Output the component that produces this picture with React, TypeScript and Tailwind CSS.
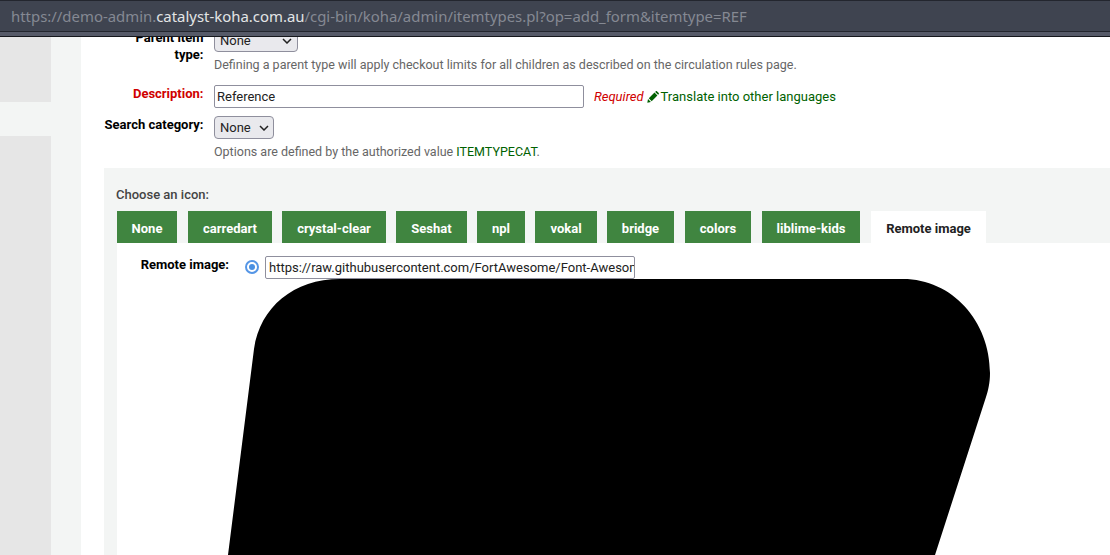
const tabs = [
  { label: 'None', w: 'w-[60px] mr-[11px]' },
  { label: 'carredart', w: 'w-[84px] mr-[10px]' },
  { label: 'crystal-clear', w: 'w-[104px] mr-[10px]' },
  { label: 'Seshat', w: 'w-[71px] mr-[10px]' },
  { label: 'npl', w: 'w-[48px] mr-[10px]' },
  { label: 'vokal', w: 'w-[62px] mr-[10px]' },
  { label: 'bridge', w: 'w-[67px] mr-[11px]' },
  { label: 'colors', w: 'w-[66px] mr-[11px]' },
  { label: 'liblime-kids', w: 'w-[98px] mr-[11px]' },
];

function Chevron() {
  return (
    <svg width="10" height="6" viewBox="0 0 10 6" fill="none" stroke="#222" strokeWidth="1.5">
      <path d="M1 1l4 4 4-4" />
    </svg>
  );
}

function Pencil() {
  return (
    <svg width="12" height="12" viewBox="0 0 12 12" fill="#006100">
      <path d="M0.3 11.7l0.7-3.6 2.9 2.9zM1.8 7.3L7.5 1.6l2.9 2.9-5.7 5.7zM8.2 0.9l0.6-0.6c0.3-0.3 0.8-0.3 1.1 0l1.8 1.8c0.3 0.3 0.3 0.8 0 1.1l-0.6 0.6z" />
    </svg>
  );
}

export default function App() {
  return (
    <div className="h-[555px] w-[1110px] overflow-hidden bg-white font-['Roboto',sans-serif] text-[13px] flex flex-col">
      <div className="h-[37px] shrink-0 bg-[#565a68] border-b border-[#15171c]">
        <div className="h-[32px] border-t border-b border-[#23262e] bg-[#3f4450] pl-[11px] pt-[5px] text-[14.92px] leading-[20px] font-['Noto_Sans',sans-serif] text-[#858993] whitespace-nowrap">
          https://demo-admin.<span className="text-[#e3e4e6]">catalyst-koha.com.au</span>/cgi-bin/koha/admin/itemtypes.pl?op=add_form&amp;itemtype=REF
        </div>
      </div>

      <div className="flex flex-1 min-h-0">
        {/* sidebar */}
        <div className="w-[81px] shrink-0 bg-[#f3f5f4] flex">
          <div className="w-[51px] flex flex-col">
            <div className="h-[65px] bg-[#e6e6e6]" />
            <div className="h-[34px]" />
            <div className="flex-1 bg-[#e6e6e6]" />
          </div>
        </div>

        <div className="flex-1 min-w-0 pl-[23px]">
          {/* form rows */}
          <div className="h-[131px] overflow-hidden">
            <div className="flex -mt-[8px]">
              <div className="w-[99.5px] shrink-0 text-right font-bold text-black leading-[17px]">
                Parent item type:
              </div>
              <div className="ml-[10.5px]">
                <div className="w-[84px] h-[23px] rounded-[4px] border border-[#8f8f9d] bg-[#e9e9ed] flex items-center justify-between pl-[5px] pr-[5px] text-[#222]">
                  None
                  <Chevron />
                </div>
                <div className="mt-[5px] text-[12.5px] leading-[16px] text-[#666]">
                  Defining a parent type will apply checkout limits for all children as described on the circulation rules page.
                </div>
              </div>
            </div>

            <div className="flex mt-[12px]">
              <div className="w-[99.5px] shrink-0 text-right font-bold text-[#d00000] leading-[17px]">
                Description:
              </div>
              <div className="ml-[10.5px] w-[370px] h-[23px] rounded-[2px] border border-[#8f8f9d] pl-[2px] flex items-center text-[#222]">
                Reference
              </div>
              <div className="ml-[10px] h-[23px] flex items-center text-[#006100]">
                <span className="italic text-[#d00000]">Required</span>
                <span className="ml-[3px] mr-[2px]">
                  <Pencil />
                </span>
                <span>Translate into other languages</span>
              </div>
            </div>

            <div className="flex mt-[8px]">
              <div className="w-[99.5px] shrink-0 text-right font-bold text-black leading-[17px]">
                Search category:
              </div>
              <div className="ml-[10.5px]">
                <div className="w-[60px] h-[23px] rounded-[4px] border border-[#8f8f9d] bg-[#e9e9ed] flex items-center justify-between pl-[5px] pr-[4px] text-[#222]">
                  None
                  <Chevron />
                </div>
                <div className="mt-[5px] text-[12.5px] leading-[16px] text-[#666]">
                  Options are defined by the authorized value <span className="text-[#006100]">ITEMTYPECAT</span>.
                </div>
              </div>
            </div>
          </div>

          {/* icon chooser */}
          <div className="h-[387px] bg-[#f3f5f4] pl-[13px] pt-[18px] overflow-hidden">
            <div className="h-[17px] leading-[17px] text-[13px] font-medium text-[#444] -ml-[1px]">Choose an icon:</div>
            <div className="flex mt-[8px] h-[32px]">
              {tabs.map((t) => (
                <div
                  key={t.label}
                  className={`${t.w} bg-[#408540] text-white font-bold text-[13px] pt-[3px] flex items-center justify-center`}
                >
                  {t.label}
                </div>
              ))}
              <div className="w-[115px] bg-white text-[#222] font-bold text-[13px] pt-[3px] flex items-center justify-center">
                Remote image
              </div>
            </div>
            <div className="bg-white h-[320px] relative">
              <div className="flex items-start pt-[13px]">
                <div className="w-[112px] text-right font-bold text-black leading-[17px]">Remote image:</div>
                <div className="ml-[16px] mt-[4px] w-[14px] h-[14px] rounded-full border-2 border-[#5596e6] flex items-center justify-center">
                  <div className="w-[6px] h-[6px] rounded-full bg-[#4a90e2]" />
                </div>
                <div className="ml-[6px] w-[370px] h-[23px] rounded-[2px] border border-[#8f8f9d] pl-[3px] flex items-center text-[#222] overflow-hidden whitespace-nowrap">
                  https://raw.githubusercontent.com/FortAwesome/Font-Awesome/master/svgs
                </div>
              </div>
              <svg className="absolute left-[105px] top-[36px]" width="780" height="276" viewBox="0 0 780 276" fill="#000">
                <path d="M6 276L32 70C38 28 72 0 118 0H681C730 0 768 42 768 94C768 104 766 112 764 118L713 276Z" />
              </svg>
            </div>
          </div>
        </div>
      </div>
    </div>
  );
}
